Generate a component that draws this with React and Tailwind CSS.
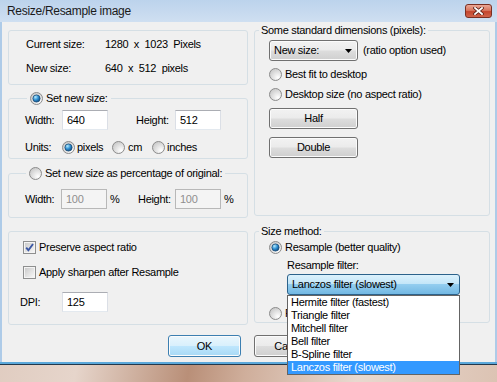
import React from 'react';

// Vista-style "Resize/Resample image" dialog

const FILTERS = [
  'Hermite filter (fastest)',
  'Triangle filter',
  'Mitchell filter',
  'Bell filter',
  'B-Spline filter',
  'Lanczos filter (slowest)',
];

function Radio({ checked }) {
  return (
    <svg width="13" height="13" viewBox="0 0 13 13" className="shrink-0">
      <defs>
        <radialGradient id="rb-fill" cx="0.7" cy="0.75" r="0.8">
          <stop offset="0" stopColor="#ffffff" />
          <stop offset="1" stopColor="#c9c9c9" />
        </radialGradient>
        <radialGradient id="rb-dot" cx="0.35" cy="0.3" r="0.8">
          <stop offset="0" stopColor="#b4ecff" />
          <stop offset="0.5" stopColor="#2e8fd2" />
          <stop offset="1" stopColor="#0b3f70" />
        </radialGradient>
      </defs>
      <circle cx="6.5" cy="6.5" r="6" fill="url(#rb-fill)" stroke="#8c8c8c" />
      {checked && (
        <circle cx="6.5" cy="6.5" r="3.6" fill="url(#rb-dot)" stroke="#1b4c79" strokeWidth="0.8" />
      )}
    </svg>
  );
}

function Check({ checked }) {
  return (
    <svg width="13" height="13" viewBox="0 0 13 13" className="shrink-0">
      <defs>
        <linearGradient id="cb-in" x1="0" y1="0" x2="1" y2="1">
          <stop offset="0" stopColor="#cbcbcb" />
          <stop offset="1" stopColor="#f6f6f6" />
        </linearGradient>
      </defs>
      <rect x="0.5" y="0.5" width="12" height="12" fill="#f4f4f4" stroke="#8e8f8f" />
      <rect x="2" y="2" width="9" height="9" fill="url(#cb-in)" />
      {checked && (
        <path d="M3.2 6.6 L5.4 9.2 L10 3" fill="none" stroke="#3b57a4" strokeWidth="1.9" />
      )}
    </svg>
  );
}

function Arrow() {
  return (
    <svg width="7" height="4" viewBox="0 0 7 4" className="shrink-0">
      <path d="M0 0 H7 L3.5 4 Z" fill="#000" />
    </svg>
  );
}

function Field({ value, disabled }) {
  return (
    <div
      className={`w-[46px] h-[20px] border flex items-center pl-[4px] ${
        disabled
          ? 'bg-[#f4f4f4] border-[#b8b8b8] text-[#8f8f8f]'
          : 'bg-white border-[#abadb3] border-x-[#dbdfe6] border-b-[#e3e9ef]'
      }`}
    >
      {value}
    </div>
  );
}

function Btn({ children, def, className = '' }) {
  return (
    <div
      className={`rounded-[3px] border flex items-center justify-center shadow-[inset_0_0_0_1px_#fbfbfb] ${
        def
          ? 'border-[#3c7fb1] bg-[linear-gradient(#eaf6fd,#d9f0fc_48%,#bee6fd_52%,#a7d9f5)]'
          : 'border-[#707070] bg-[linear-gradient(#f2f2f2,#ebebeb_48%,#dddddd_52%,#cfcfcf)]'
      } ${className}`}
    >
      {children}
    </div>
  );
}

function Combo({ children, focused, className = '' }) {
  return (
    <div
      className={`h-[21px] rounded-[3px] border flex items-center justify-between pl-[4px] pr-[5px] ${
        focused
          ? 'border-[#2c628b] bg-[linear-gradient(#dcf1fc,#c1e5f8_50%,#93cdef_50%,#72b8e3)]'
          : 'border-[#707070] bg-[linear-gradient(#f2f2f2,#ebebeb_48%,#dddddd_52%,#cfcfcf)] shadow-[inset_0_0_0_1px_#fbfbfb]'
      } ${className}`}
    >
      <span>{children}</span>
      <Arrow />
    </div>
  );
}

const RadioRow = ({ checked, label, className = '' }) => (
  <div className={`flex items-center gap-[3px] h-[14px] leading-[14px] whitespace-nowrap ${className}`}>
    <Radio checked={checked} />
    {label}
  </div>
);

const GROUP = 'border border-[#d5dfe5] rounded-[3px]';

function TitleBar() {
  return (
    <div className="h-[22px] flex items-center justify-between pl-[7px] pr-[5px] bg-[linear-gradient(#bcd3ec,#cfdff1)]">
      <span className="text-[12px] text-[#1a1a1a]">Resize/Resample image</span>
      <div className="w-[27px] h-[14px] rounded-[3px] border border-[#7a2f22] flex items-center justify-center bg-[linear-gradient(#eba897,#d8765f_45%,#c4452d_55%,#d0644b)]">
        <svg width="11" height="8" viewBox="0 0 11 8">
          <path d="M2 1 L9 7 M9 1 L2 7" stroke="#5a2018" strokeWidth="3.4" strokeLinecap="square" />
          <path d="M2 1 L9 7 M9 1 L2 7" stroke="#ffffff" strokeWidth="1.8" strokeLinecap="square" />
        </svg>
      </div>
    </div>
  );
}

function LeftColumn() {
  return (
    <div className="w-[240px] flex flex-col shrink-0">
      {/* ── Current / new size ─────────────────────────── */}
      <div className={`mt-[8px] h-[55px] ${GROUP} pl-[17px] pt-[6px] flex flex-col gap-[10px]`}>
        <div className="flex h-[14px] leading-[14px]">
          <span className="w-[79px]">Current size:</span>
          <span className="whitespace-pre">1280  x  1023  Pixels</span>
        </div>
        <div className="flex h-[14px] leading-[14px]">
          <span className="w-[79px]">New size:</span>
          <span className="whitespace-pre">640  x  512  pixels</span>
        </div>
      </div>

      {/* ── Set new size ───────────────────────────────── */}
      <fieldset className={`mt-[6px] h-[68px] ${GROUP}`}>
        <legend className="ml-[18px] px-[3px]">
          <RadioRow checked label="Set new size:" />
        </legend>
        <div className="pl-[16px] pt-[5px]">
          <div className="flex items-center h-[20px]">
            <span className="w-[37px]">Width:</span>
            <Field value="640" />
            <span className="ml-[28px] w-[39px]">Height:</span>
            <Field value="512" />
          </div>
          <div className="flex items-center h-[14px] leading-[14px] mt-[10px]">
            <span className="w-[37px]">Units:</span>
            <span className="w-[50px] flex items-center gap-[2px]"><Radio checked />pixels</span>
            <span className="w-[40px] flex items-center gap-[3px]"><Radio />cm</span>
            <span className="flex items-center gap-[2px]"><Radio />inches</span>
          </div>
        </div>
      </fieldset>

      {/* ── Percentage ─────────────────────────────────── */}
      <fieldset className={`mt-[7px] h-[52px] ${GROUP}`}>
        <legend className="ml-[17px] px-[3px]">
          <RadioRow label="Set new size as percentage of original:" />
        </legend>
        <div className="pl-[16px] pt-[9px] flex items-center h-[29px]">
          <span className="w-[36px]">Width:</span>
          <Field value="100" disabled />
          <span className="ml-[3px] w-[28px]">%</span>
          <span className="w-[37px]">Height:</span>
          <Field value="100" disabled />
          <span className="ml-[3px]">%</span>
        </div>
      </fieldset>

      {/* ── Options ────────────────────────────────────── */}
      <div className={`mt-[13px] h-[94px] ${GROUP} pl-[14px] pt-[8px] flex flex-col`}>
        <div className="flex items-center gap-[3px] h-[14px] leading-[14px]">
          <Check checked />Preserve aspect ratio
        </div>
        <div className="mt-[11px] flex items-center gap-[3px] h-[14px] leading-[14px]">
          <Check />Apply sharpen after Resample
        </div>
        <div className="mt-[13px] -ml-[3px] flex items-center h-[20px]">
          <span className="w-[42px]">DPI:</span>
          <Field value="125" />
        </div>
      </div>

      <div className="mt-[10px] ml-[160px]">
        <Btn def className="w-[73px] h-[22px]">OK</Btn>
      </div>
    </div>
  );
}

function RightColumn() {
  return (
    <div className="w-[236px] flex flex-col shrink-0">
      {/* ── Standard dimensions ───────────────────────── */}
      <fieldset className={`mt-[1px] h-[193px] ${GROUP}`}>
        <legend className="ml-[4px] px-[2px] h-[14px] leading-[14px]">
          Some standard dimensions (pixels):
        </legend>
        <div className="pl-[14px] pt-[3px] flex flex-col items-start">
          <div className="flex items-center gap-[5px]">
            <Combo className="w-[89px]">New size:</Combo>
            <span>(ratio option used)</span>
          </div>
          <RadioRow className="mt-[6px]" label="Best fit to desktop" />
          <RadioRow className="mt-[6px]" label="Desktop size (no aspect ratio)" />
          <Btn className="mt-[7px] w-[89px] h-[21px]">Half</Btn>
          <Btn className="mt-[8px] w-[89px] h-[21px]">Double</Btn>
        </div>
      </fieldset>

      {/* ── Size method ──────────────────────────────── */}
      <fieldset className={`mt-[8px] h-[99px] ${GROUP}`}>
        <legend className="ml-[4px] px-[2px] h-[14px] leading-[14px]">Size method:</legend>
        <div className="pl-[14px] pt-[2px] flex flex-col items-start">
          <RadioRow checked label="Resample (better quality)" />
          <div className="ml-[18px] mt-[4px] h-[14px] leading-[14px]">Resample filter:</div>
          <div className="relative ml-[18px] mt-[2px]">
            <Combo focused className="w-[173px]">Lanczos filter (slowest)</Combo>
            <div className="absolute left-0 top-full z-10 w-[173px] border border-[#646464] bg-white">
              {FILTERS.map((f, i) => (
                <div
                  key={f}
                  className={`h-[13px] leading-[13px] pl-[3px] whitespace-nowrap ${
                    i === FILTERS.length - 1 ? 'bg-[#3399ff] text-white' : ''
                  }`}
                >
                  {f}
                </div>
              ))}
            </div>
          </div>
          <RadioRow className="mt-[11px]" label="Resize (faster)" />
        </div>
      </fieldset>

      <Btn className="mt-[12px] w-[73px] h-[22px]">Cancel</Btn>
    </div>
  );
}

export default function App() {
  return (
    <div className="w-[497px] h-[382px] overflow-hidden relative font-['Liberation_Sans',Arial,sans-serif] text-[11px] tracking-[-0.3px] text-black bg-[linear-gradient(100deg,#dcc6b9_0%,#e6d5cb_25%,#b98f78_45%,#cfae9b_55%,#e8d9cf_75%,#dcc3b3_100%)]">
      <div className="h-[365px] flex flex-col">
        <TitleBar />
        <div className="flex-1 flex border-x-2 border-[#aecbe8] bg-[#f0f0f0] pl-[6px] pr-[5px] gap-[6px]">
          <LeftColumn />
          <RightColumn />
        </div>
        <div className="h-[2px] bg-[#5ba8da]" />
        <div className="h-[1px] bg-[#22374a]" />
      </div>
    </div>
  );
}
